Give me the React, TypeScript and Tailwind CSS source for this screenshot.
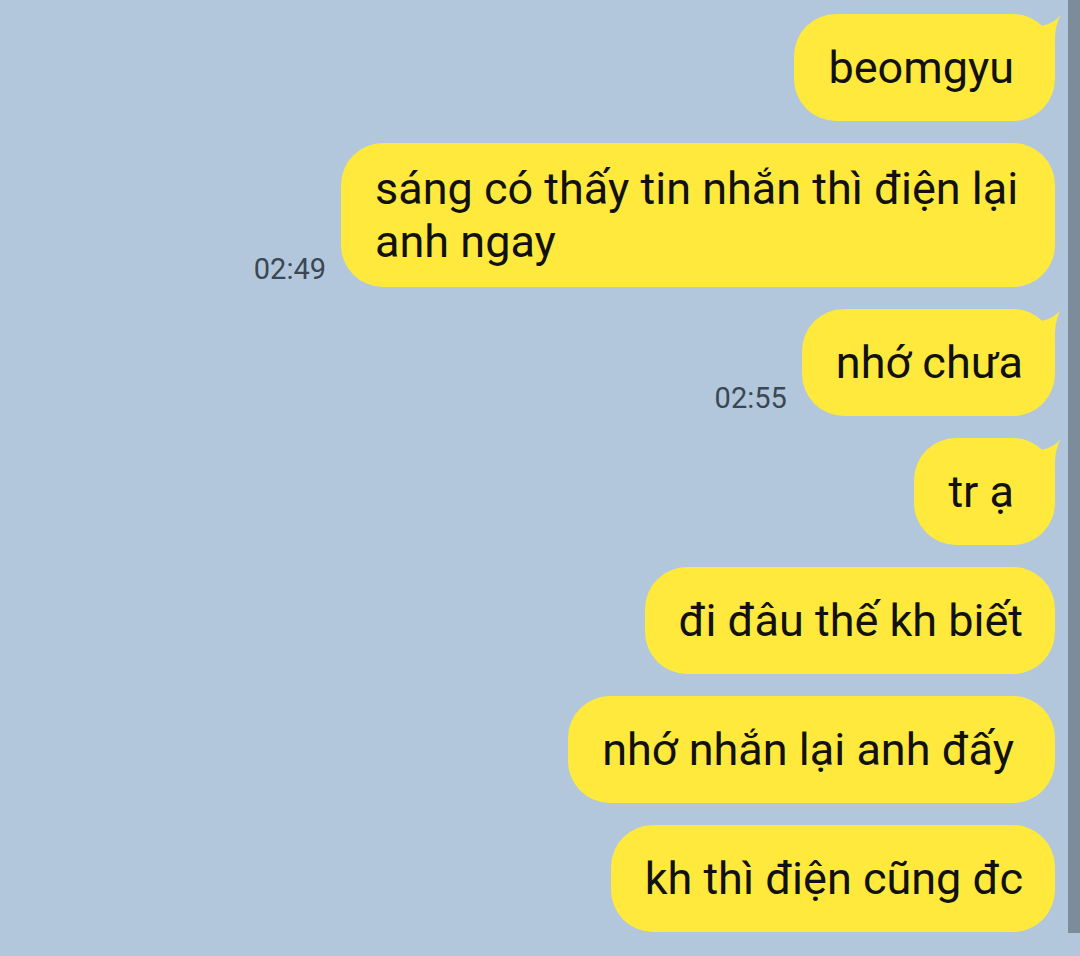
import React from "react";

type Msg = {
  id: number;
  text: string;
  time?: string;
  tail?: boolean;
  extraRight?: boolean;
};

const MESSAGES: Msg[] = [
  { id: 1, text: "beomgyu", tail: true, extraRight: true },
  { id: 2, text: "sáng có thấy tin nhắn thì điện lại anh ngay", time: "02:49" },
  { id: 3, text: "nhớ chưa", time: "02:55", tail: true },
  { id: 4, text: "tr ạ", tail: true, extraRight: true },
  { id: 5, text: "đi đâu thế kh biết" },
  { id: 6, text: "nhớ nhắn lại anh đấy", extraRight: true },
  { id: 7, text: "kh thì điện cũng đc" },
];

// little horn on the top-right corner of the first bubble in a group
const Tail: React.FC = () => (
  <svg
    className="absolute -right-[6px] top-0"
    width="44"
    height="50"
    viewBox="0 0 44 50"
  >
    <path
      d="M16 20 Q20 12 28 11 Q36 9 43 2 Q37 14 38 32 L38 50 L16 50 Z"
      fill="#fee93c"
    />
  </svg>
);

const Bubble: React.FC<{ msg: Msg }> = ({ msg }) => (
  <div className="flex items-end justify-end">
    {msg.time && (
      <span className="mr-[15px] mb-[1px] text-[29px] leading-[34px] text-[#3b4753]">
        {msg.time}
      </span>
    )}
    <div
      className={
        "relative flex min-h-[107px] max-w-[714px] items-center rounded-[42px] bg-[#fee93c] py-[19px] pl-[34px] text-[45px] leading-[53px] text-[#111] " +
        (msg.extraRight ? "pr-[41px]" : "pr-[32px]")
      }
    >
      {msg.tail && <Tail />}
      <span className="relative">{msg.text}</span>
    </div>
  </div>
);

const App: React.FC = () => {
  return (
    <div
      className="flex h-[956px] w-[1080px] overflow-hidden bg-[#b2c7db]"
      style={{ fontFamily: "Roboto, 'Noto Sans', sans-serif" }}
    >
      {/* chat column */}
      <div className="flex flex-1 flex-col gap-[22px] pt-[14px] pr-[13px]">
        {MESSAGES.map((m) => (
          <Bubble key={m.id} msg={m} />
        ))}
      </div>

      {/* scrollbar strip */}
      <div className="h-[933px] w-[12px] bg-[#7d8c9a]" />
    </div>
  );
};

export default App;
